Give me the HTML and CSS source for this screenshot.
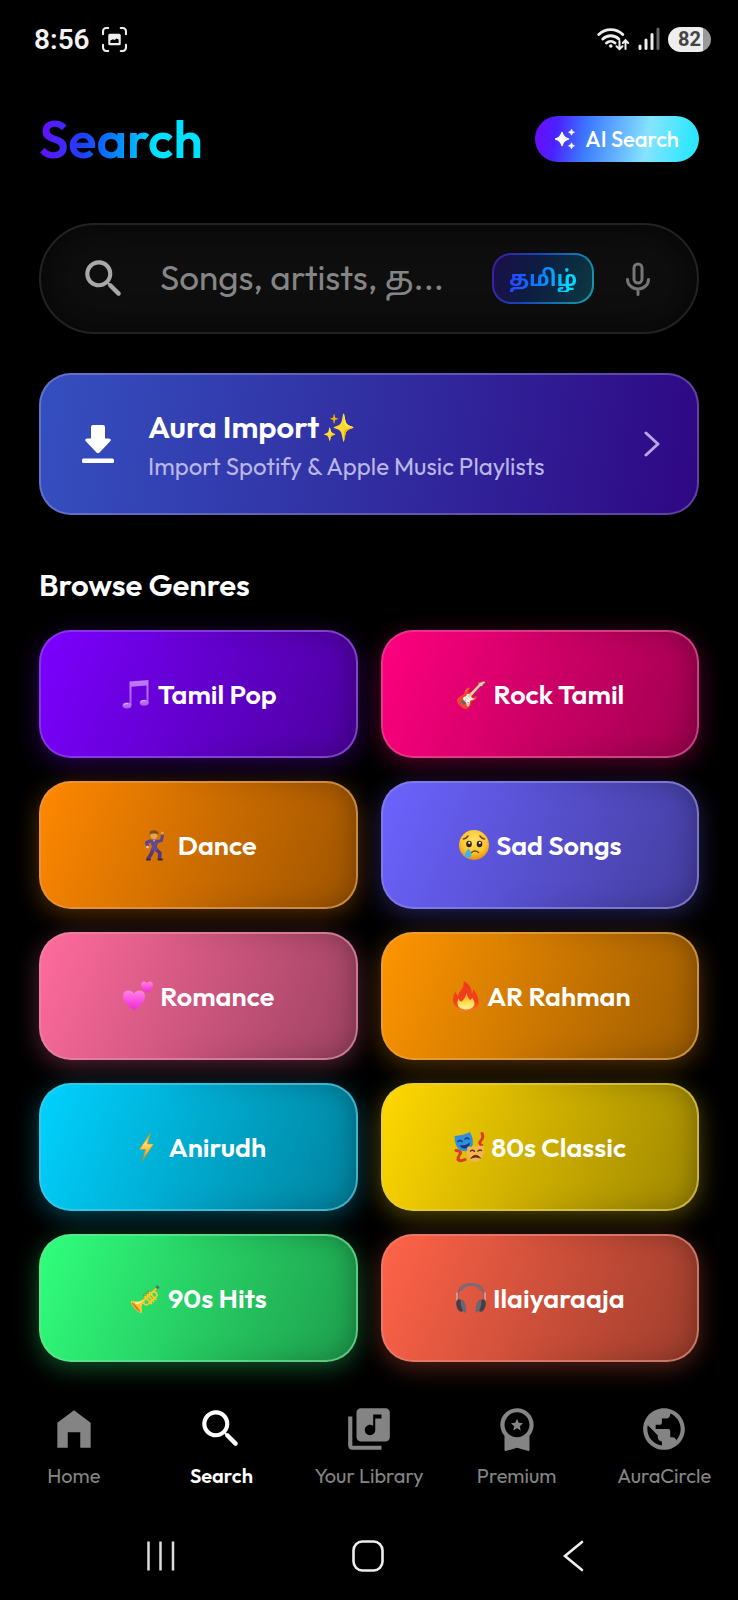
FILE: index.html
```html
<!DOCTYPE html>
<html lang="en">
<head>
<meta charset="utf-8">
<meta name="viewport" content="width=device-width, initial-scale=1">
<title>Search</title>
<link rel="stylesheet" href="styles.css">
</head>
<body>
<div class="screen">
  <header class="status">
    <div class="status-group">
      <span class="clock">8:56</span>
      <svg class="status-shot" viewBox="0 0 24 24" fill="none" stroke="#eee" stroke-width="2" stroke-linecap="round"><path d="M1 7V4a3 3 0 0 1 3-3h2M18 1h2a3 3 0 0 1 3 3v3M23 17v3a3 3 0 0 1-3 3h-2M6 23H4a3 3 0 0 1-3-3v-3"/><path fill="#eee" stroke="none" fill-rule="evenodd" d="M7.500 6.500h9a1.500 1.500 0 0 1 1.500 1.500v8a1.500 1.500 0 0 1-1.500 1.500h-9A1.500 1.500 0 0 1 6 16V8a1.500 1.500 0 0 1 1.500-1.500zM8 15.300h8v-3.300l-2-1-2 1.500-1.500-.8L8 13z"/></svg>
    </div>
    <div class="status-group status-right">
      <svg class="status-wifi" viewBox="0 0 33 24" fill="none" stroke="#eee" stroke-width="2.800" stroke-linecap="round"><path d="M1.800 7.500a17 17 0 0 1 24 0M5.800 12a11.500 11.500 0 0 1 16 0M9.500 16a6.300 6.300 0 0 1 8.500 0"/><circle cx="13.800" cy="19" r="1.800" fill="#eee" stroke="none"/><path stroke-width="2" d="M22.500 14v8M19.500 19.200l3 3 3-3M28.500 22v-8.500M25.800 16l2.700-2.800 2.700 2.800"/></svg>
      <svg class="status-signal" viewBox="0 0 22 24" stroke-width="3" stroke-linecap="round" stroke="#eee"><path d="M2 19v2.500M8 13v8.500M14 7.500v14"/><path stroke="#666" d="M20 2v19.500"/></svg>
      <span class="battery">82</span>
    </div>
  </header>

  <main class="content">
    <div class="title-row">
      <h1 class="title">Search</h1>
      <button class="ai-button" type="button">
        <svg class="ai-icon" viewBox="0 0 20 20" fill="#fff"><path d="M7 3.500Q8.200 8.800 13.500 10Q8.200 11.200 7 16.500Q5.800 11.200.5 10Q5.800 8.800 7 3.500z" stroke="#fff" stroke-width="1.500" stroke-linejoin="round"/><path d="M16.500.2l1 2 2 1-2 1-1 2-1-2-2-1 2-1zM16.500 13.800l1 2 2 1-2 1-1 2-1-2-2-1 2-1z" stroke="#fff" stroke-width=".6" stroke-linejoin="round"/></svg>
        <span>AI Search</span>
      </button>
    </div>

    <form class="search" role="search">
      <svg class="search-icon" viewBox="0 0 24 24"><path fill="#a8a8a8" d="M15.500 14h-.79l-.28-.27c1.200-1.400 1.820-3.310 1.480-5.340-.47-2.780-2.790-5-5.590-5.340-4.230-.52-7.790 3.040-7.270 7.270.34 2.800 2.560 5.120 5.340 5.590 2.030.34 3.940-.28 5.340-1.480l.27.28v.79l4.250 4.250c.41.41 1.080.41 1.490 0 .41-.41.41-1.080 0-1.490L15.500 14zm-6 0C7.010 14 5 11.990 5 9.500S7.010 5 9.500 5 14 7.010 14 9.500 11.990 14 9.500 14z"/></svg>
      <input class="search-input" type="text" aria-label="Search songs and artists" placeholder="Songs, artists, த...">
      <button class="lang" type="button"><span class="lang-text">தமிழ்</span></button>
      <button class="mic" type="button" aria-label="Voice search">
        <svg viewBox="0 0 24 34" fill="none" stroke="#757575" stroke-width="3" stroke-linecap="round"><rect x="8" y="2" width="8" height="19" rx="4"/><path d="M1.500 17.500a10.500 9.500 0 0 0 21 0M12 27v5.500"/></svg>
      </button>
    </form>

    <button class="import" type="button">
      <svg class="import-icon" viewBox="0 0 32 38" fill="#fff"><path d="M11 0h10a2 2 0 0 1 2 2v11.500h4q3 .5 1 3L17.500 27.500q-1.500 1.500-3 0L4 16.500q-2-2.500 1-3h4V2a2 2 0 0 1 2-2z"/><rect y="33.500" width="32" height="4.500" rx="1.500"/></svg>
      <span class="import-text">
        <span class="import-title">Aura Import<span class="sparkle">✨</span></span>
        <span class="import-sub">Import Spotify &amp; Apple Music Playlists</span>
      </span>
      <svg class="import-chevron" viewBox="0 0 16 26" fill="none" stroke="#b9a5e0" stroke-width="3" stroke-linecap="round" stroke-linejoin="round"><path d="M2 2l12 11L2 24"/></svg>
    </button>

    <h2 class="section-title">Browse Genres</h2>
    <div class="genres">
      <button class="genre violet" type="button">
        <svg class="emoji" viewBox="0 0 32 32"><defs><linearGradient id="note" x1="0" y1="0" x2="0" y2="1"><stop offset="0" stop-color="#c07bf5"/><stop offset="1" stop-color="#a45cf0"/></linearGradient></defs><g fill="url(#note)"><path d="M9.500 3.500L28.500 2v22.500h-2V7.500L11.500 8.800V27h-2z"/><ellipse cx="7" cy="27.500" rx="4.500" ry="3"/><ellipse cx="24.200" cy="24.800" rx="4.500" ry="3"/></g><path d="M4 27q1.500-1.800 4-1.500M21 24q1.500-1.800 4-1.500" fill="none" stroke="#dcb4ff"/></svg>
        <span>Tamil Pop</span>
      </button>
      <button class="genre magenta" type="button"><span class="emoji-text">🎸</span><span>Rock Tamil</span></button>
      <button class="genre orange" type="button">
        <svg class="emoji" viewBox="0 0 32 32" stroke-linecap="round" stroke-linejoin="round"><path d="M17.500 12.500l4-1 .8-5" fill="none" stroke="#5b4590" stroke-width="3"/><path d="M10 12L6.500 13.500l1 3.500" fill="none" stroke="#5b4590" stroke-width="3"/><path d="M13 20l-1.500 4.500L8.500 29M15.500 20l4.500 4-.5 5" fill="none" stroke="#54397a" stroke-width="3.600"/><path d="M9.500 11q4-1.500 8 0l1 1.500-1.500 4 .5 5q-3.500 1.500-6 0l.5-4z" fill="#604a96"/><path d="M12.500 10.500l1.500 2.500 1.500-2.500z" fill="#e8ad55"/><circle cx="14" cy="6.500" r="3.400" fill="#e5a44c"/><path d="M9.500 5.500Q9 1.500 13.500 1.200 18.500 1 18.500 5.500q-4.500-1.800-9 0z" fill="#7c5026"/><circle cx="22.300" cy="4" r="1.500" fill="#e8a048"/><circle cx="7.500" cy="18" r="1.300" fill="#f0d8c0"/><path d="M7 30.500h3M18.500 30.500h3.500" stroke="#372a4e" stroke-width="2"/></svg>
        <span>Dance</span>
      </button>
      <button class="genre indigo" type="button">
        <svg class="emoji" viewBox="0 0 32 32"><defs><radialGradient id="face" cx=".5" cy=".35" r=".65"><stop offset="0" stop-color="#ffe36a"/><stop offset=".65" stop-color="#fdc52e"/><stop offset="1" stop-color="#e78b10"/></radialGradient></defs><circle cx="16" cy="16" r="15" fill="url(#face)"/><ellipse cx="11" cy="15" rx="2.800" ry="3.300" fill="#3a2108"/><ellipse cx="21.500" cy="15" rx="2.800" ry="3.300" fill="#3a2108"/><circle cx="11.300" cy="13.800" r="1.100" fill="#fff"/><circle cx="21.800" cy="13.800" r="1.100" fill="#fff"/><path d="M5.500 10q3-.5 4.500-3M26.500 10q-3-.5-4.500-3M13.500 23.500q3.500-3 7 0" fill="none" stroke="#7b4510" stroke-width="1.500" stroke-linecap="round"/><path d="M10.500 19.500Q13.500 23.500 13.300 25.500a3.200 3.200 0 0 1-6.400 0Q7 23.500 10.500 19.500z" fill="#39b6ee"/></svg>
        <span>Sad Songs</span>
      </button>
      <button class="genre pink" type="button">
        <svg class="emoji" viewBox="0 0 32 32"><defs><linearGradient id="heart" x1="0" y1="0" x2="0" y2="1"><stop offset="0" stop-color="#ff86e6"/><stop offset=".55" stop-color="#fb4be0"/><stop offset="1" stop-color="#e62fd0"/></linearGradient></defs><g fill="url(#heart)"><path d="M12 30.500Q1 23 1 16.500 1 11 6 10.500q4 0 6 3 2-3 6-3 5 .5 5 6Q23 23 12 30.500z"/><path d="M25 13Q19 8.500 19 5q.3-3.300 3-3.500 2 0 3 2 1-2 3-2 2.700.2 3 3.500 0 3.500-6 8z"/></g></svg>
        <span>Romance</span>
      </button>
      <button class="genre amber" type="button">
        <svg class="emoji" viewBox="0 0 32 32"><defs><linearGradient id="flame" x1="0" y1="0" x2="0" y2="1"><stop offset="0" stop-color="#ee3a20"/><stop offset=".7" stop-color="#f0401a"/><stop offset="1" stop-color="#fa7a1c"/></linearGradient><linearGradient id="core" x1="0" y1="0" x2="0" y2="1"><stop offset="0" stop-color="#ff9a26"/><stop offset=".6" stop-color="#ffdf4a"/><stop offset="1" stop-color="#fff3b0"/></linearGradient></defs><path d="M14.500 1Q22 4 23 13.500q1.500-1 1-4.500 6 7 5.500 13.500Q29 31 17 31 5 30.500 4 21 3.500 16 7 11q0 4 2 5 .5-3 3-6 3.500-4 2.500-9z" fill="url(#flame)"/><path d="M17.500 13q.5 4 3.500 7 2-1 2-2.500 3.500 5 2 8-2 4-8 4-6 0-8-4-1.500-3.500.5-7 1 3 3 3 4-3 5-8.500z" fill="url(#core)"/></svg>
        <span>AR Rahman</span>
      </button>
      <button class="genre cyan" type="button">
        <svg class="emoji" viewBox="0 0 32 32"><defs><linearGradient id="bolt" x1="0" y1="0" x2="0" y2="1"><stop offset="0" stop-color="#a6a53c"/><stop offset=".4" stop-color="#ffdc66"/><stop offset=".65" stop-color="#f6b63e"/><stop offset="1" stop-color="#8f8a3c"/></linearGradient></defs><path d="M20.500 1.500L9.500 18.500h6L12 30.500 23.500 13h-6z" fill="url(#bolt)" stroke="#b98f2e" stroke-width=".6" stroke-linejoin="round"/></svg>
        <span>Anirudh</span>
      </button>
      <button class="genre yellow" type="button">
        <svg class="emoji" viewBox="0 0 32 32" fill="none" stroke-linecap="round"><path d="M3 19.500q6 .5 4 3.500t-2 5.500q2 2.500 7 0M29 2.500q2 4-1 7t1 5" stroke="#dc3a2c" stroke-width="3"/><path d="M1.500 5Q10 4.500 17 1q4 8 2.500 13-1 5-6 6Q6 21 3 14 1.500 10 1.500 5z" fill="#2f8fdc"/><path d="M5 10.500q2-2 4 0M12 8q2-2 4 0" stroke="#123a78" stroke-width="1.500"/><path d="M6.500 14.500q6 .5 10.500-3-.5 5.500-5 6-3.500.3-5.500-3z" fill="#123a78"/><path d="M14.500 15.500q7 .5 16.500-1 .5 8-2 12-2.500 4.500-7.500 4.500t-7-5q-1-4 0-10.500z" fill="#f5b454"/><path d="M17.500 20q2-1.500 4 .3M25 20q2-1.500 3.500-.5" stroke="#663313" stroke-width="1.500"/><path d="M18 27q4.500-5.500 9.500 0-4.500-2-9.500 0z" fill="#663313" stroke="#663313"/></svg>
        <span>80s Classic</span>
      </button>
      <button class="genre green" type="button"><span class="emoji-text">🎺</span><span>90s Hits</span></button>
      <button class="genre tomato" type="button">
        <svg class="emoji" viewBox="0 0 32 32" fill="none" stroke-linecap="round"><path d="M3 19Q1 2 16 2t13 17" stroke="#85666b" stroke-width="2"/><path d="M6 7.500Q9 2.500 16 2.500t10 5" stroke="#796d75" stroke-width="3"/><path d="M2 11v7M30 11v7" stroke="#e9a39a" stroke-width="1.500"/><ellipse cx="5" cy="23.500" rx="3.500" ry="6.500" fill="#434049" transform="rotate(-15 5 23.500)"/><ellipse cx="27" cy="23.500" rx="3.500" ry="6.500" fill="#434049" transform="rotate(15 27 23.500)"/><ellipse cx="8.500" cy="24" rx="2.300" ry="7" fill="#6b6670" transform="rotate(-15 8.500 24)"/><ellipse cx="23.500" cy="24" rx="2.300" ry="7" fill="#6b6670" transform="rotate(15 23.500 24)"/></svg>
        <span>Ilaiyaraaja</span>
      </button>
    </div>
  </main>

  <nav class="tabs" aria-label="Main">
    <a class="tab" href="#home"><svg viewBox="0 0 24 24"><path d="M4 21V9l8-6 8 6v12h-5v-7.500H9V21z"/></svg><span>Home</span></a>
    <a class="tab active" href="#search" aria-current="page"><svg viewBox="0 0 24 24"><path d="M15.500 14h-.79l-.28-.27c1.200-1.400 1.820-3.310 1.480-5.340-.47-2.780-2.790-5-5.590-5.340-4.230-.52-7.790 3.040-7.270 7.270.34 2.800 2.560 5.120 5.340 5.590 2.030.34 3.940-.28 5.340-1.480l.27.28v.79l4.250 4.250c.41.41 1.080.41 1.490 0 .41-.41.41-1.080 0-1.490L15.500 14zm-6 0C7.010 14 5 11.990 5 9.500S7.010 5 9.500 5 14 7.010 14 9.500 11.990 14 9.500 14z"/></svg><span>Search</span></a>
    <a class="tab" href="#library"><svg viewBox="0 0 24 24"><path d="M20 2H8c-1.100 0-2 .9-2 2v12c0 1.100.9 2 2 2h12c1.100 0 2-.9 2-2V4c0-1.100-.9-2-2-2zm-2 5h-3v5.500c0 1.380-1.120 2.500-2.500 2.500S10 13.880 10 12.500s1.120-2.500 2.500-2.500c.57 0 1.080.19 1.500.51V5h4v2zM4 6H2v14c0 1.100.9 2 2 2h14v-2H4V6z"/></svg><span>Your Library</span></a>
    <a class="tab" href="#premium"><svg viewBox="0 0 24 24"><path d="M20 10c0-4.420-3.580-8-8-8s-8 3.580-8 8c0 2.030.76 3.870 2 5.280v6.500c0 .6.500.9 1 .7l5-1.480 5 1.480c.500.2 1-.1 1-.7v-6.500c1.240-1.410 2-3.250 2-5.280zm-8-6c3.310 0 6 2.690 6 6s-2.690 6-6 6-6-2.690-6-6 2.690-6 6-6z"/><path d="M12 7.100l.83 1.950 2.100.18-1.600 1.390.48 2.060L12 11.590l-1.810 1.090.48-2.060-1.600-1.390 2.100-.18z"/></svg><span>Premium</span></a>
    <a class="tab" href="#circle"><svg viewBox="0 0 24 24"><path d="M12 2C6.480 2 2 6.480 2 12s4.480 10 10 10 10-4.480 10-10S17.520 2 12 2zm-1 17.930c-3.950-.49-7-3.850-7-7.930 0-.62.08-1.210.21-1.790L9 15v1c0 1.100.9 2 2 2v1.930zm6.900-2.540c-.26-.81-1-1.390-1.900-1.390h-1v-3c0-.55-.45-1-1-1H8v-2h2c.55 0 1-.45 1-1V7h2c1.100 0 2-.9 2-2v-.41c2.930 1.190 5 4.060 5 7.410 0 2.080-.8 3.970-2.100 5.390z"/></svg><span>AuraCircle</span></a>
  </nav>

  <footer class="system">
    <button type="button" aria-label="Recent apps"><svg viewBox="0 0 32 32" fill="none" stroke="#ddd" stroke-width="2.500"><path d="M3.500 1.500v29M15.500 1.500v29M28 1.500v29"/></svg></button>
    <button type="button" aria-label="Home screen"><svg viewBox="0 0 32 32" fill="none" stroke="#eee" stroke-width="2.600"><rect x="1.500" y="1.500" width="29" height="29" rx="9"/></svg></button>
    <button type="button" aria-label="Back"><svg viewBox="0 0 32 32" fill="none" stroke="#eee" stroke-width="2.600" stroke-linecap="round"><path d="M24 2L7 16l17 14"/></svg></button>
  </footer>
</div>
</body>
</html>
```
FILE: styles.css
```css
* { box-sizing: border-box; }

body {
  margin: 0;
  background: #000;
  color: #fff;
  font-family: Outfit, Lato, "Noto Sans Tamil", "Noto Color Emoji", sans-serif;
}

button {
  margin: 0;
  padding: 0;
  border: 0;
  background: none;
  color: inherit;
  font: inherit;
  cursor: pointer;
}

svg { display: block; flex: none; }

.screen {
  display: flex;
  flex-direction: column;
  min-height: 100vh;
}

/* Status bar */
.status {
  display: flex;
  align-items: center;
  justify-content: space-between;
  height: 78px;
  padding: 0 27px 0 34px;
  font-family: Roboto, sans-serif;
}
.status-group { display: flex; align-items: center; gap: 12px; }
.status-right { gap: 8px; }
.clock { font-size: 28px; font-weight: 600; color: #f2f2f2; }
.status-shot { width: 25px; height: 25px; }
.status-wifi { width: 33px; height: 24px; }
.status-signal { width: 22px; height: 24px; }
.battery {
  width: 43px;
  height: 25px;
  border-radius: 13px;
  background: linear-gradient(90deg, #eee 82%, #999 82%);
  color: #444;
  font-size: 20px;
  font-weight: 700;
  line-height: 25px;
  text-align: center;
}

/* Page body */
.content { padding: 0 39px; }

.title-row {
  display: flex;
  align-items: center;
  justify-content: space-between;
  padding: 25px 0 48px;
}
.title {
  margin: 0;
  font-size: 52px;
  font-weight: 600;
  line-height: 72px;
  background: linear-gradient(95deg, #5f14ff 5%, #1d3fff 28%, #0095ff 52%, #00e0ff 70%);
  -webkit-background-clip: text;
  background-clip: text;
  color: transparent;
}
.ai-button {
  display: flex;
  align-items: center;
  gap: 10px;
  height: 46px;
  padding: 0 20px;
  border-radius: 23px;
  background: linear-gradient(100deg, #6a0cff 2%, #4a22ff 14%, #3d7bff 32%, #86e4ff 68%, #2ee6ff 94%);
  font-size: 22px;
  font-weight: 500;
}
.ai-icon { width: 20px; height: 20px; }

/* Search field */
.search {
  display: flex;
  align-items: center;
  height: 111px;
  padding: 0 43px 0 38px;
  border: 2px solid #222;
  border-radius: 56px;
  background: #0e0e0e;
  box-shadow: inset 0 0 32px #050505;
}
.search-icon { width: 50px; height: 50px; }
.search-input {
  flex: 1;
  min-width: 0;
  margin: 0 20px 0 31px;
  padding: 0 0 4px;
  border: 0;
  outline: 0;
  background: none;
  color: #fff;
  font: inherit;
  font-size: 35px;
  text-overflow: ellipsis;
}
.search-input::placeholder { color: #858585; opacity: 1; }
.lang {
  width: 102px;
  height: 51px;
  border: 2px solid transparent;
  border-radius: 19px;
  background:
    linear-gradient(110deg, #1b0f4a, #0d1c42 40%, #0b3840) padding-box,
    linear-gradient(110deg, #43189f, #1547b8 40%, #15a0a8) border-box;
  font-size: 22px;
  font-weight: 700;
}
.lang-text {
  background: linear-gradient(100deg, #2a3cff, #0a84ff 50%, #00d8ff 85%);
  -webkit-background-clip: text;
  background-clip: text;
  color: transparent;
}
.mic { margin-left: 32px; padding-right: 4px; }
.mic svg { width: 24px; height: 34px; }

/* Import banner */
.import {
  display: flex;
  align-items: center;
  width: 100%;
  height: 142px;
  margin-top: 39px;
  padding: 0 37px 0 41px;
  border: 2px solid transparent;
  border-radius: 32px;
  background:
    linear-gradient(98deg, #354fc0, #3130a2 48%, #2f0785) padding-box,
    linear-gradient(98deg, #6273ca, #625cb4 48%, #60409f) border-box;
  text-align: left;
}
.import-icon { width: 32px; height: 38px; }
.import-text {
  display: flex;
  flex: 1;
  flex-direction: column;
  gap: 6px;
  margin-left: 34px;
  padding-top: 2px;
}
.import-title {
  display: flex;
  align-items: center;
  gap: 3px;
  font-size: 31px;
  font-weight: 600;
  line-height: 36px;
}
.sparkle { font-size: 27px; }
.import-sub { color: #b9b6e8; font-size: 24px; line-height: 30px; }
.import-chevron { width: 16px; height: 26px; }

/* Genres */
.section-title {
  margin: 52px 0 27px;
  font-size: 31px;
  font-weight: 600;
  line-height: 36px;
}
.genres {
  display: grid;
  grid-template-columns: 1fr 1fr;
  gap: 23px;
}
.genre {
  position: relative;
  display: flex;
  align-items: center;
  justify-content: center;
  gap: 6px;
  height: 128px;
  border: 2px solid transparent;
  border-radius: 32px;
  background:
    linear-gradient(112deg, var(--tone), color-mix(in srgb, var(--tone) 62%, #000)) padding-box,
    linear-gradient(112deg, color-mix(in srgb, var(--tone) 75%, #bbb), color-mix(in srgb, var(--tone) 52%, #888)) border-box;
  box-shadow: 0 6px 24px color-mix(in srgb, var(--tone) 32%, transparent);
  font-size: 27px;
  font-weight: 600;
}
.genre::after {
  content: "";
  position: absolute;
  inset: 0;
  border-radius: 30px;
  box-shadow: inset 0 0 26px rgba(0, 0, 0, 0.3);
  -webkit-mask-image: linear-gradient(90deg, transparent 35%, #000);
  mask-image: linear-gradient(90deg, transparent 35%, #000);
}
.emoji { width: 32px; height: 32px; }
.emoji-text { font-size: 26px; }
.violet { --tone: #7b00ff; }
.magenta { --tone: #ff007f; }
.orange { --tone: #ff8800; }
.indigo { --tone: #6c63ff; }
.pink { --tone: #ff6b9d; }
.amber { --tone: #ff9500; }
.cyan { --tone: #00d2ff; }
.yellow { --tone: #ffd900; }
.green { --tone: #30ff7c; }
.tomato { --tone: #ff6348; }

/* Bottom tabs */
.tabs {
  display: grid;
  grid-template-columns: repeat(5, 1fr);
  margin-top: auto;
  padding-top: 42px;
}
.tab {
  display: flex;
  flex-direction: column;
  align-items: center;
  gap: 8px;
  color: #848484;
  font-size: 20px;
  line-height: 28px;
  text-decoration: none;
  white-space: nowrap;
}
.tab svg { width: 50px; height: 50px; fill: currentColor; }
.tab.active { color: #fff; font-weight: 600; }

/* System navigation */
.system {
  display: flex;
  align-items: center;
  justify-content: space-between;
  height: 88px;
  margin-top: 22px;
  padding: 0 148px 0 145px;
}
.system svg { width: 32px; height: 32px; }
```
